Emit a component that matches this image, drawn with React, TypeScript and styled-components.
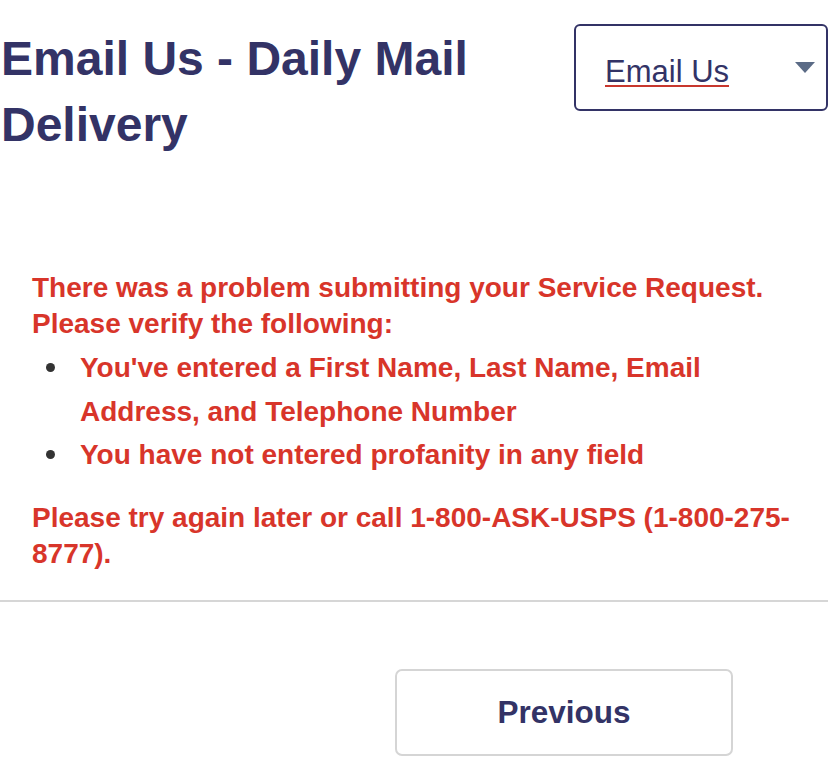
import React from "react";
import styled, { createGlobalStyle } from "styled-components";

const GlobalStyle = createGlobalStyle`
  html, body {
    margin: 0;
    padding: 0;
    background: #ffffff;
  }
  body {
    font-family: "Liberation Sans", Arial, Helvetica, sans-serif;
    width: 828px;
    overflow: hidden;
  }
`;

const Page = styled.div`
  width: 828px;
  display: flex;
  flex-direction: column;
`;

const Header = styled.div`
  display: flex;
  justify-content: space-between;
  align-items: flex-start;
`;

const Title = styled.h1`
  margin: 26px 0 0 1px;
  width: 560px;
  font-size: 48px;
  line-height: 66px;
  font-weight: 700;
  color: #333366;
`;

const Select = styled.div`
  margin-top: 24px;
  box-sizing: border-box;
  width: 254px;
  height: 87px;
  border: 2px solid #333366;
  border-radius: 6px;
  display: flex;
  align-items: flex-start;
  justify-content: space-between;
  padding: 28px 11px 0 29px;
`;

const SelectText = styled.span`
  font-size: 31px;
  line-height: 36px;
  color: #333366;
  text-decoration: underline;
  text-decoration-color: #c8372d;
  text-decoration-thickness: 2px;
  text-underline-offset: 3px;
`;

const Caret = styled.svg`
  width: 20px;
  height: 11px;
  margin-top: 8px;
`;

const ErrorBox = styled.div`
  margin-top: 112px;
  padding-left: 32px;
  width: 764px;
  color: #d8352a;
  font-size: 28px;
  font-weight: 700;
`;

const ErrorText = styled.p<{ $gap?: number }>`
  margin: ${(p) => p.$gap ?? 0}px 0 0;
  line-height: 36px;
`;

const List = styled.ul`
  margin: 4px 0 0;
  padding: 0 0 0 48px;
  list-style: none;
  line-height: 43.5px;
`;

const Item = styled.li`
  position: relative;

  &::before {
    content: "";
    position: absolute;
    left: -34px;
    top: 17px;
    width: 9px;
    height: 9px;
    border-radius: 50%;
    background: #333333;
  }
`;

const Divider = styled.hr`
  margin: 28px 0 0;
  border: none;
  height: 2px;
  background: #d6d6d6;
`;

const ButtonRow = styled.div`
  display: flex;
  padding: 67px 0 0 395px;
`;

const Button = styled.button`
  box-sizing: border-box;
  width: 338px;
  height: 87px;
  background: #ffffff;
  border: 2px solid #d5d5d5;
  border-radius: 7px;
  font-family: "Liberation Sans", Arial, sans-serif;
  font-size: 31.5px;
  font-weight: 700;
  color: #333366;
`;

export default function App() {
  return (
    <Page>
      <GlobalStyle />
      <Header>
        <Title>Email Us - Daily Mail Delivery</Title>
        <Select>
          <SelectText>Email Us</SelectText>
          <Caret viewBox="0 0 20 11">
            <path d="M0 0 H20 L10 11 Z" fill="#5b6b86" />
          </Caret>
        </Select>
      </Header>
      <ErrorBox>
        <ErrorText>
          There was a problem submitting your Service Request. Please verify the following:
        </ErrorText>
        <List>
          <Item>You've entered a First Name, Last Name, Email Address, and Telephone Number</Item>
          <Item>You have not entered profanity in any field</Item>
        </List>
        <ErrorText $gap={23}>
          Please try again later or call 1-800-ASK-USPS (1-800-275-8777).
        </ErrorText>
      </ErrorBox>
      <Divider />
      <ButtonRow>
        <Button>Previous</Button>
      </ButtonRow>
    </Page>
  );
}
